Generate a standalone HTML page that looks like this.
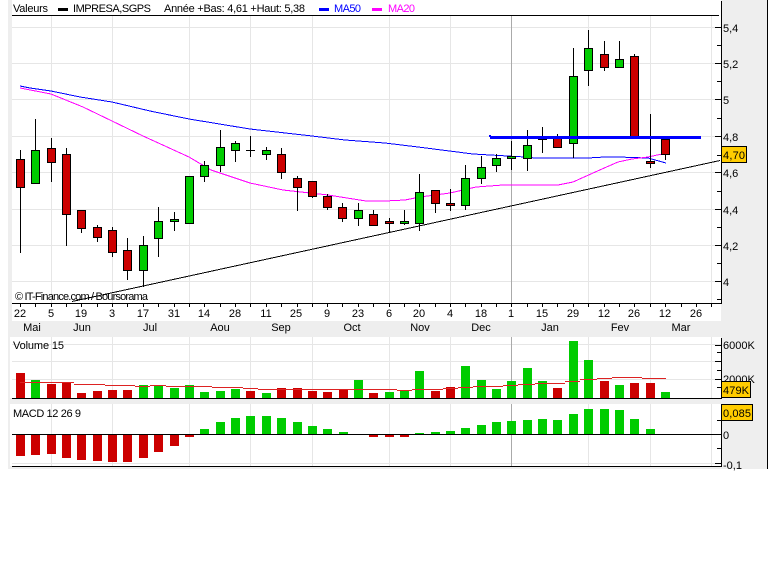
<!DOCTYPE html>
<html><head><meta charset="utf-8"><title>IMPRESA,SGPS</title>
<style>
html,body{margin:0;padding:0;background:#fff;width:769px;height:583px;overflow:hidden}
svg{display:block}
text{font-family:"Liberation Sans",sans-serif;font-size:11px;fill:#000}
.c{shape-rendering:crispEdges}
</style></head><body>
<svg width="769" height="583" viewBox="0 0 769 583" xmlns="http://www.w3.org/2000/svg">
<g class="c">
<rect x="8" y="0" width="760" height="469" fill="#eee"/>
<rect x="12" y="0" width="709" height="321" fill="#fff"/>
<rect x="10" y="337" width="711" height="61" fill="#fff"/>
<rect x="10" y="404" width="711" height="62" fill="#fff"/>
<path d="M767.5 0V469" stroke="#000" fill="none"/>
<!-- grids -->
<path fill="none" stroke="#e6e6e6" d="M12 27.5H721M12 63.5H721M12 99.5H721M12 136.5H721M12 172.5H721M12 209.5H721M12 245.5H721M12 281.5H721
M51.5 16V303M112.5 16V303M189.5 16V303M250.5 16V303M312.5 16V303M389.5 16V303M450.5 16V303M588.5 16V303M650.5 16V303M711.5 16V303
M12 344.5H721M12 361.5H721M12 379.5H721
M51.5 337V398M112.5 337V398M189.5 337V398M250.5 337V398M312.5 337V398M389.5 337V398M450.5 337V398M588.5 337V398M650.5 337V398M711.5 337V398
M12 463.5H721
M51.5 404V466M112.5 404V466M189.5 404V466M250.5 404V466M312.5 404V466M389.5 404V466M450.5 404V466M588.5 404V466M650.5 404V466M711.5 404V466"/>
<path fill="none" stroke="#aaa" d="M511.5 16V303M511.5 337V398M511.5 404V466"/>
</g>
<!-- moving averages -->
<g class="c" fill="none">
<polyline stroke="#00f" points="20,86 30,88 51,91 80,97 112,102 150,111 189,119 250,129 312,136 345,140 385,143 418,147 473,154 525,157 535,158 588,158 605,157 618,157 648,158 666,163"/>
<polyline stroke="#f0f" points="20,88 51,94 83,107 112,121 143,136 189,157 211,170 250,183 283,190 328,195 366,201 385,201 405,200 420,197 450,193 476,187 503,185 558,185 573,182 602,169 618,162 632,159 648,157 662,154"/>
</g>
<!-- candles -->
<g class="c">
<path fill="none" stroke="#000" d="M20.5 150V253M35.5 119V183M51.5 138V182M66.5 148V246M81.5 210V233M97.5 225V242M112.5 227V257M127.5 238V280M143.5 236V287M158.5 207V257M174.5 212V231M189.5 176V223M204.5 161V182M220.5 130V172M235.5 141V162M250.5 136V157M266.5 147V160M281.5 148V179M297.5 176V211M312.5 181V198M327.5 194V210M342.5 203V222M358.5 203V226M373.5 210V225M389.5 218V233M404.5 210V225M419.5 174V231M435.5 190V213M450.5 189V211M465.5 165V210M481.5 156V184M496.5 154V172M511.5 141V170M527.5 130V171M542.5 127V153M557.5 134V148M573.5 48V158M588.5 30V86M604.5 41V71M619.5 41V67M634.5 54V136M650.5 114V168M665.5 136V160M246 150.5H255"/>
<path fill="#c00" stroke="#000" d="M16.5 159.5h8v28h-8zM47.5 148.5h8v14h-8zM62.5 154.5h8v60h-8zM77.5 210.5h8v18h-8zM93.5 227.5h8v10h-8zM108.5 230.5h8v22h-8zM123.5 250.5h8v20h-8zM277.5 154.5h8v18h-8zM293.5 178.5h8v9h-8zM308.5 181.5h8v15h-8zM323.5 196.5h8v11h-8zM338.5 207.5h8v11h-8zM369.5 214.5h8v11h-8zM385.5 221.5h8v2h-8zM431.5 190.5h8v13h-8zM446.5 203.5h8v2h-8zM553.5 136.5h8v11h-8zM600.5 54.5h8v13h-8zM630.5 56.5h8v80h-8zM646.5 161.5h8v2h-8zM661.5 139.5h8v15h-8z"/>
<path fill="#0c0" stroke="#000" d="M31.5 150.5h8v33h-8zM139.5 245.5h8v25h-8zM154.5 221.5h8v17h-8zM170.5 219.5h8v2h-8zM185.5 176.5h8v47h-8zM200.5 165.5h8v11h-8zM216.5 147.5h8v18h-8zM231.5 143.5h8v7h-8zM262.5 150.5h8v4h-8zM354.5 210.5h8v8h-8zM400.5 221.5h8v2h-8zM415.5 192.5h8v31h-8zM461.5 178.5h8v27h-8zM477.5 167.5h8v11h-8zM492.5 158.5h8v7h-8zM507.5 156.5h8v2h-8zM523.5 145.5h8v13h-8zM538.5 136.5h8v3h-8zM569.5 76.5h8v67h-8zM584.5 48.5h8v22h-8zM615.5 59.5h8v8h-8z"/>
<!-- support lines -->
<path fill="none" stroke="#000" d="M72 301.5L720 160.5"/>
<rect x="490" y="136" width="211" height="3" fill="#00f"/>
<rect x="489" y="135" width="2" height="2" fill="#00f"/>
<!-- volume bars -->
<path fill="#c00" d="M16 373h9V398h-9zM47 384h9V398h-9zM62 382h9V398h-9zM77 393h9V398h-9zM93 391h9V398h-9zM108 390h9V398h-9zM123 390h9V398h-9zM246 391h9V398h-9zM277 388h9V398h-9zM293 388h9V398h-9zM308 391h9V398h-9zM323 392h9V398h-9zM339 389h9V398h-9zM369 393h9V398h-9zM431 391h9V398h-9zM446 387h9V398h-9zM553 388h9V398h-9zM600 381h9V398h-9zM630 383h9V398h-9zM646 383h9V398h-9z"/>
<path fill="#0c0" d="M31 380h9V398h-9zM139 385h9V398h-9zM154 386h9V398h-9zM170 388h9V398h-9zM185 385h9V398h-9zM200 392h9V398h-9zM216 391h9V398h-9zM231 389h9V398h-9zM262 393h9V398h-9zM354 380h9V398h-9zM385 392h9V398h-9zM400 390h9V398h-9zM415 371h9V398h-9zM461 366h9V398h-9zM477 380h9V398h-9zM492 389h9V398h-9zM507 381h9V398h-9zM523 368h9V398h-9zM538 381h9V398h-9zM569 341h9V398h-9zM584 360h9V398h-9zM615 385h9V398h-9zM661 392h9V398h-9z"/>
<path fill="none" stroke="#d22" d="M20 382.5H74M74 384.5H89M89 384.5H105M105 385.5H135M135 386.5H150M150 385.5H166M166 386.5H212M212 387.5H243M243 388.5H258M258 389.5H397M397 390.5H412M412 389.5H443M443 388.5H458M458 387.5H473M473 386.5H503M503 385.5H518M518 384.5H535M535 383.5H565M565 381.5H580M580 379.5H597M597 378.5H612M612 377.5H642M642 378.5H666"/>
<!-- macd bars -->
<path fill="#c00" d="M16 434h9V456h-9zM31 434h9V455h-9zM47 434h9V454h-9zM62 434h9V458h-9zM77 434h9V460h-9zM93 434h9V461h-9zM108 434h9V462h-9zM123 434h9V462h-9zM139 434h9V458h-9zM154 434h9V452h-9zM170 434h9V446h-9zM185 434h9V437h-9zM369 434h9V437h-9zM385 434h9V437h-9zM400 434h9V437h-9z"/>
<path fill="#0c0" d="M200 429h9V434h-9zM216 422h9V434h-9zM231 418h9V434h-9zM246 416h9V434h-9zM262 416h9V434h-9zM277 418h9V434h-9zM293 422h9V434h-9zM308 426h9V434h-9zM323 429h9V434h-9zM339 432h9V434h-9zM415 433h9V434h-9zM431 432h9V434h-9zM446 431h9V434h-9zM461 428h9V434h-9zM477 425h9V434h-9zM492 422h9V434h-9zM507 421h9V434h-9zM523 420h9V434h-9zM538 419h9V434h-9zM553 420h9V434h-9zM569 414h9V434h-9zM584 409h9V434h-9zM600 409h9V434h-9zM615 410h9V434h-9zM630 419h9V434h-9zM646 429h9V434h-9z"/>
<!-- axes -->
<path fill="none" stroke="#000" d="M12 15.5H719M721.5 1V303.5M12 303.5H722M721.5 338V398.5M12 398.5H722M721.5 404V466.5M12 466.5H722M12 434.5H721
M715 27.5H721M717 45.5H721M715 63.5H721M717 81.5H721M715 99.5H721M717 118.5H721M715 136.5H721M717 155.5H721M715 172.5H721M717 191.5H721M715 209.5H721M717 227.5H721M715 245.5H721M717 263.5H721M715 281.5H721M717 299.5H721
M715 345.5H721M717 352.5H721M715 361.5H721M717 370.5H721M715 379.5H721M717 387.5H721
M717 420.5H721M715 434.5H721M717 448.5H721M715 463.5H721
M20.5 303V307M35.5 303V307M51.5 303V307M66.5 303V307M81.5 303V307M97.5 303V307M112.5 303V307M127.5 303V307M143.5 303V307M158.5 303V307M174.5 303V307M189.5 303V307M204.5 303V307M220.5 303V307M235.5 303V307M250.5 303V307M266.5 303V307M281.5 303V307M297.5 303V307M312.5 303V307M327.5 303V307M342.5 303V307M358.5 303V307M373.5 303V307M389.5 303V307M404.5 303V307M419.5 303V307M435.5 303V307M450.5 303V307M465.5 303V307M481.5 303V307M496.5 303V307M511.5 303V307M527.5 303V307M542.5 303V307M557.5 303V307M573.5 303V307M588.5 303V307M604.5 303V307M619.5 303V307M634.5 303V307M650.5 303V307M665.5 303V307M681.5 303V307M696.5 303V307M711.5 303V307"/>
<!-- legend swatches -->
<rect x="58" y="8" width="10" height="3" fill="#000"/>
<rect x="319" y="8" width="10" height="3" fill="#00f"/>
<rect x="372" y="8" width="10" height="3" fill="#f0f"/>
</g>
<!-- legend text -->
<text x="13" y="12" textLength="35" lengthAdjust="spacing">Valeurs</text>
<text x="73" y="12" textLength="78" lengthAdjust="spacing">IMPRESA,SGPS</text>
<text x="164" y="12" textLength="141" lengthAdjust="spacing">Année +Bas: 4,61 +Haut: 5,38</text>
<text x="334" y="12" textLength="27" lengthAdjust="spacing" style="fill:#00f">MA50</text>
<text x="388" y="12" textLength="27" lengthAdjust="spacing" style="fill:#f0f">MA20</text>
<text x="15" y="300" textLength="133" lengthAdjust="spacing">© IT-Finance.com / Boursorama</text>
<text x="13" y="349" textLength="51" lengthAdjust="spacing">Volume 15</text>
<text x="13" y="417" textLength="68" lengthAdjust="spacing">MACD 12 26 9</text>
<!-- price labels -->
<text x="723" y="32">5,4</text>
<text x="723" y="68">5,2</text>
<text x="723" y="104">5</text>
<text x="723" y="141">4,8</text>
<text x="723" y="177">4,6</text>
<text x="723" y="214">4,4</text>
<text x="723" y="250">4,2</text>
<text x="723" y="286">4</text>
<text x="723" y="349">6000K</text>
<text x="723" y="383">2000K</text>
<text x="723" y="439">0</text>
<text x="723" y="469">-0,1</text>
<!-- date labels -->
<g text-anchor="middle">
<text x="20" y="317">22</text><text x="51" y="317">5</text><text x="81" y="317">19</text><text x="112" y="317">3</text><text x="143" y="317">17</text><text x="174" y="317">31</text><text x="204" y="317">14</text><text x="235" y="317">28</text><text x="266" y="317">11</text><text x="296" y="317">25</text><text x="327" y="317">9</text><text x="358" y="317">23</text><text x="389" y="317">6</text><text x="419" y="317">20</text><text x="450" y="317">4</text><text x="481" y="317">18</text><text x="511" y="317">1</text><text x="542" y="317">15</text><text x="573" y="317">29</text><text x="604" y="317">12</text><text x="634" y="317">26</text><text x="665" y="317">12</text><text x="696" y="317">26</text>
<text x="32" y="331">Mai</text><text x="82" y="331">Jun</text><text x="150" y="331">Jul</text><text x="220" y="331">Aou</text><text x="281" y="331">Sep</text><text x="352" y="331">Oct</text><text x="420" y="331">Nov</text><text x="481" y="331">Dec</text><text x="550" y="331">Jan</text><text x="620" y="331">Fev</text><text x="681" y="331">Mar</text>
</g>
<!-- badges -->
<g class="c" fill="#fc0" stroke="#000">
<rect x="721.5" y="146.5" width="25" height="16"/>
<rect x="721.5" y="381.5" width="29" height="16"/>
<rect x="721.5" y="404.5" width="31" height="16"/>
</g>
<text x="723" y="159" textLength="22" lengthAdjust="spacing">4,70</text>
<text x="723" y="394" textLength="26" lengthAdjust="spacing">479K</text>
<text x="723" y="417" textLength="28" lengthAdjust="spacing">0,085</text>
</svg>
</body></html>
